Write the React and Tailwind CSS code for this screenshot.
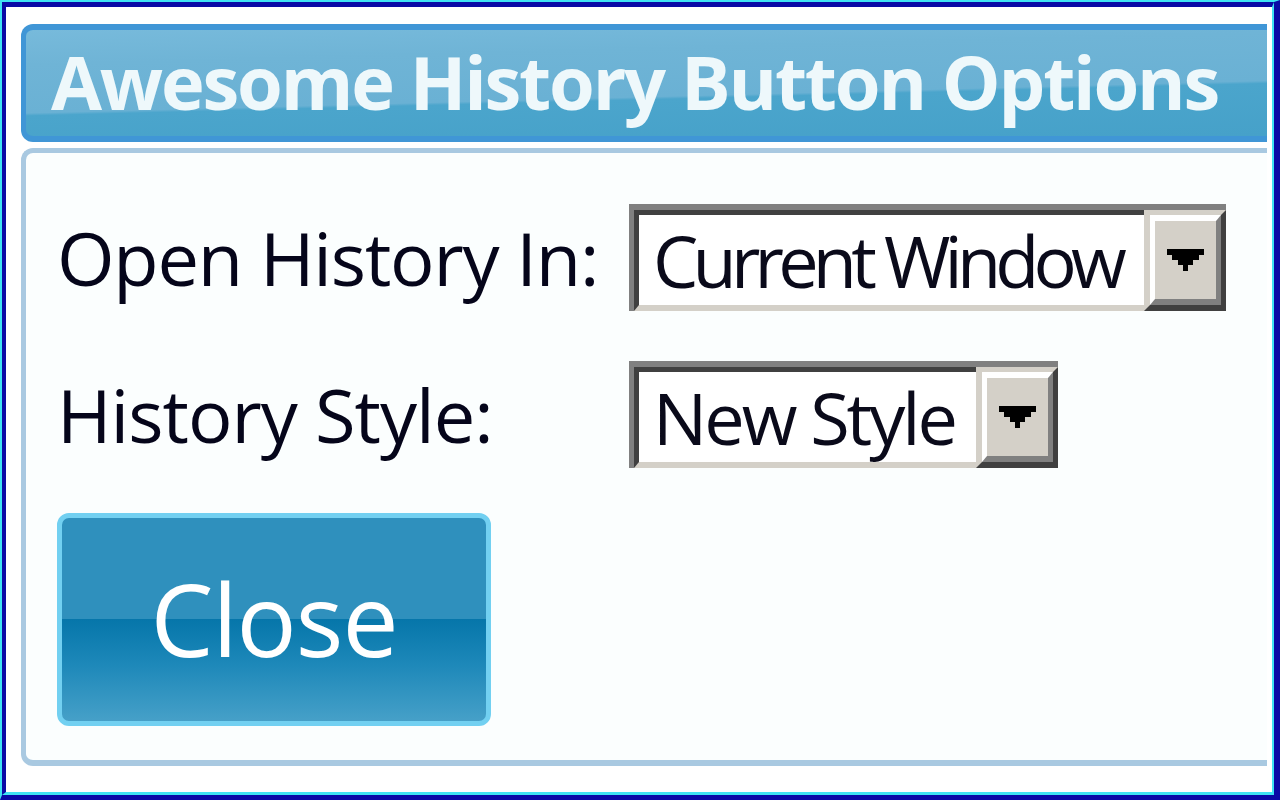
import React from "react";

const font = { fontFamily: '"Open Sans", "Noto Sans", sans-serif' };

function Arrow() {
  return (
    <svg width="37" height="22" viewBox="0 0 7 4" shapeRendering="crispEdges" className="block shrink-0">
      <path d="M0 0h7v1h-1v1h-1v1h-1v1h-1v-1h-1v-1h-1v-1h-1z" fill="#000" />
    </svg>
  );
}

function Select({ width, textWidth, text, tracking }) {
  return (
    <div className="flex border-t-[6px] border-l-[5px] border-t-[#808080] border-l-[#808080]" style={{ width }}>
      <div className="flex items-center h-[101px] bg-white border-t-[5px] border-l-[5px] border-b-[6px] border-t-[#404040] border-l-[#404040] border-b-[#d4d0c8] pl-[14px] overflow-hidden" style={{ width: textWidth }}>
        <span className={`text-[72px] leading-none text-[#0a0a1a] whitespace-nowrap ${tracking}`} style={font}>{text}</span>
      </div>
      <div className="w-[82px] h-[101px] shrink-0 border-t-[5px] border-l-[6px] border-r-[5px] border-b-[6px] border-t-[#d4d0c8] border-l-[#d4d0c8] border-r-[#404040] border-b-[#404040]">
        <div className="w-full h-full bg-[#d4d0c8] border-t-[6px] border-l-[5px] border-r-[5px] border-b-[6px] border-t-white border-l-white border-r-[#808080] border-b-[#808080] flex items-center justify-center">
          <Arrow />
        </div>
      </div>
    </div>
  );
}

export default function App() {
  return (
    <div className="w-[1280px] h-[800px] overflow-hidden border-t-2 border-l-2 border-r-[6px] border-b-[5px] border-t-[#3fe3f3] border-l-[#3fe3f3] border-r-[#0a0aa6] border-b-[#0a0aa6]">
      <div className="w-full h-full bg-white border-t-[5px] border-l-4 border-r-2 border-b-[3px] border-t-[#0a0aa6] border-l-[#0a0aa6] border-r-[#3fe3f3] border-b-[#3fe3f3] flex flex-col pt-[17px] pl-[15px] pr-[5px]">
        {/* Header */}
        <div className="h-[118px] rounded-l-[12px] border-t-[6px] border-b-[6px] border-l-[5px] border-[#4096d6] bg-[linear-gradient(178.5deg,#77badb_0%,#6fb4d6_25%,#6ab1d4_60%,#4ba5cc_62%,#46a1c9_100%)] flex items-center pl-[25px]">
          <span className="text-[74px] font-bold leading-none text-[#eef8fb] tracking-[-2.2px] whitespace-nowrap pb-[2px]" style={font}>
            Awesome History Button Options
          </span>
        </div>
        {/* Panel */}
        <div className="mt-[6px] h-[618px] rounded-l-[12px] border-t-[5px] border-l-[5px] border-b-[6px] border-[#a9c9e1] bg-[#fbfefe] pl-[31px] pt-[51px]">
          <div className="grid grid-cols-[572px_auto] gap-y-[50px] items-center">
            <span className="text-[74px] leading-none text-[#05051a] tracking-[-1.2px] whitespace-nowrap" style={font}>Open History In:</span>
            <Select width={597} textWidth={515} text="Current Window" tracking="tracking-[-5.8px]" />
            <span className="text-[74px] leading-none text-[#05051a] tracking-[-1px] whitespace-nowrap" style={font}>History Style:</span>
            <Select width={429} textWidth={347} text="New Style" tracking="tracking-[-3px]" />
          </div>
          <button className="mt-[45px] w-[434px] h-[213px] rounded-[12px] border-[5px] border-[#72d0f1] bg-[linear-gradient(to_bottom,#2f90bd_0%,#2f90bd_50%,#0676aa_50%,#1d88b9_72%,#46a0c8_100%)] flex items-center justify-center">
            <span className="text-[100px] leading-none text-white tracking-[-1px] pb-[4px]" style={font}>Close</span>
          </button>
        </div>
      </div>
    </div>
  );
}
